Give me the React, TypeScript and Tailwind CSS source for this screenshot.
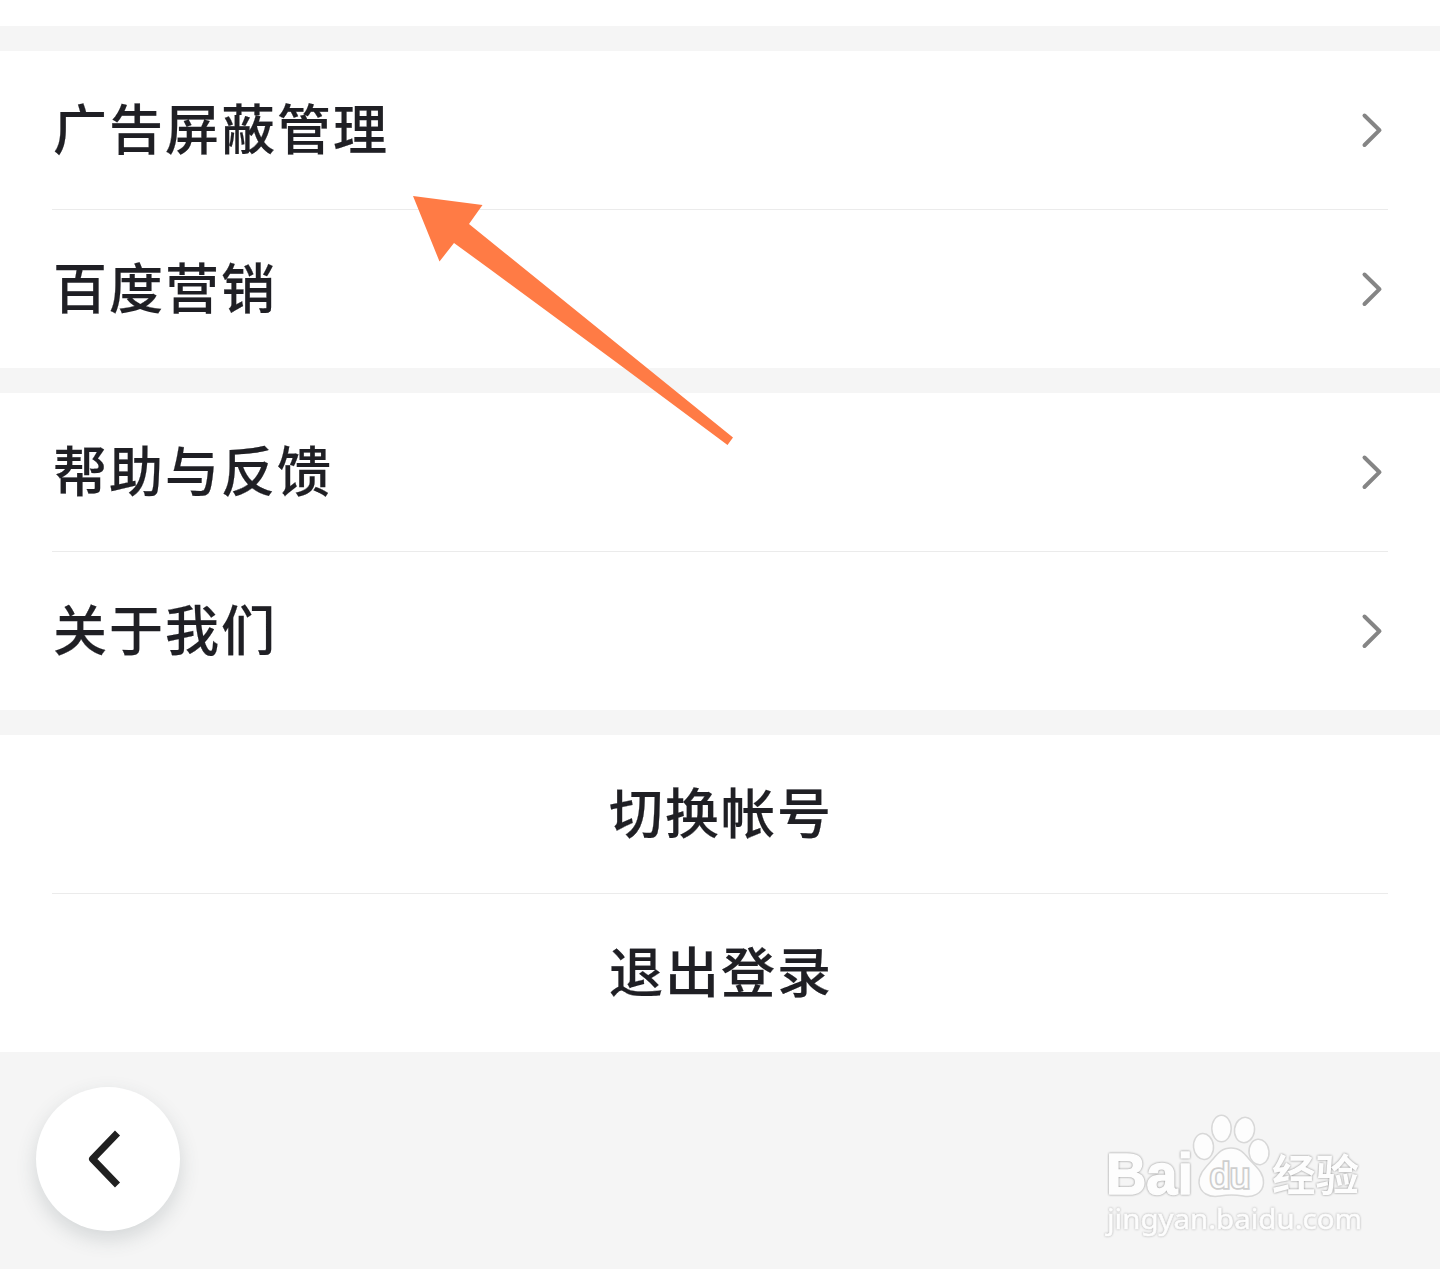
type RowItem = {
  label: string;
};

const linkGroups: RowItem[][] = [
  [{ label: "广告屏蔽管理" }, { label: "百度营销" }],
  [{ label: "帮助与反馈" }, { label: "关于我们" }],
];

const accountActions: RowItem[] = [{ label: "切换帐号" }, { label: "退出登录" }];

const labelClass =
  "text-[54px] leading-none font-medium tracking-[2px] text-[#1f1f24] [-webkit-text-stroke:0.2px_#1f1f24]";

const ChevronRight = () => (
  <svg className="h-9 w-6" viewBox="0 0 24 36" fill="none" stroke="#858585" strokeWidth="4">
    <path d="M4.500 3.500 L19.500 18.200 L4.500 33" strokeLinecap="round" strokeLinejoin="round" />
  </svg>
);

const Divider = () => <div className="mx-[52px] h-px bg-[#ebebeb]" />;

const LinkRow = ({ label }: RowItem) => (
  <button className="flex h-[158px] w-full items-center justify-between pr-14 pl-[53px]">
    <span className={`${labelClass} pb-[7px]`}>{label}</span>
    <ChevronRight />
  </button>
);

const ActionRow = ({ label }: RowItem) => (
  <button className="flex h-[158px] w-full items-center justify-center pb-[6px] pl-[2px]">
    <span className={labelClass}>{label}</span>
  </button>
);

const PointerArrow = () => (
  <svg
    className="pointer-events-none absolute top-[190px] left-[405px] h-[262px] w-[335px]"
    viewBox="405 190 335 262"
  >
    <path
      d="M413 196 L482.500 205 L469 224 Q600 330 733 437.500 L727.500 445 Q590 342 454 243 L439.500 261.500 Z"
      fill="#ff7b45"
    />
  </svg>
);

const BaiduWatermark = () => (
  <svg className="h-[150px] w-[290px]" viewBox="0 0 290 150" fill="#fdfdfd">
    <g stroke="#d8d8d8" strokeWidth="1.5">
      <ellipse cx="113.5" cy="46.5" rx="10" ry="13" transform="rotate(-6 113.5 46.5)" />
      <ellipse cx="131.5" cy="28.5" rx="9.7" ry="13.3" />
      <ellipse cx="154.5" cy="30" rx="10" ry="12.7" transform="rotate(8 154.5 30)" />
      <ellipse cx="169" cy="52" rx="10" ry="12.7" transform="rotate(-6 169 52)" />
      <path d="M141 48 C150 48 154 53 159 59 C165 66 174 72 173.500 83 C173 94 162 98 153 96 C145 94.500 138 94.500 130 96 C119 98 110 93 109 83 C108.500 73 117 66 123 59 C128 53 132 48 141 48 Z" />
    </g>
    <g
      className="[filter:drop-shadow(0_0_0.9px_#888888)]"
      stroke="#fdfdfd"
      strokeLinejoin="round"
    >
      <text
        x="16"
        y="94"
        className="font-['Liberation_Sans'] text-[58px] font-bold"
        strokeWidth="1.6"
        textLength="87"
        lengthAdjust="spacingAndGlyphs"
      >
        Bai
      </text>
      <text
        x="182"
        y="91"
        className="font-['Noto_Sans_CJK_SC'] text-[43px] font-bold"
        strokeWidth="0"
        textLength="87"
        lengthAdjust="spacingAndGlyphs"
      >
        经验
      </text>
    </g>
    <text
      x="17"
      y="129"
      className="font-['Noto_Sans'] text-[28px] [filter:drop-shadow(0_0_0.8px_#aaaaaa)]"
      stroke="#fdfdfd"
      strokeWidth="0.6"
      textLength="255"
      lengthAdjust="spacingAndGlyphs"
    >
      jingyan.baidu.com
    </text>
    <text
      x="120"
      y="88"
      className="font-['Liberation_Sans'] text-[35px] [paint-order:stroke]"
      stroke="#cecece"
      strokeWidth="3.6"
      strokeLinejoin="miter"
      textLength="40"
      lengthAdjust="spacingAndGlyphs"
    >
      du
    </text>
  </svg>
);

const App = () => {
  return (
    <div className="relative flex h-[1269px] w-[1440px] flex-col overflow-hidden bg-[#f5f5f5] font-['Noto_Sans_CJK_SC',sans-serif]">
      <div className="h-[26px] bg-white" />
      <main className="mt-[25px] flex flex-col gap-[25px]">
        {linkGroups.map(([first, second]) => (
          <section key={first.label} className="bg-white">
            <LinkRow label={first.label} />
            <Divider />
            <LinkRow label={second.label} />
          </section>
        ))}
        <section className="bg-white">
          <ActionRow label={accountActions[0].label} />
          <Divider />
          <ActionRow label={accountActions[1].label} />
        </section>
      </main>

      <footer className="flex flex-1 items-start justify-between pt-[35px] pr-[60px] pl-9">
        <button className="flex size-36 items-center justify-center rounded-full bg-white shadow-[0_8px_20px_rgba(60,75,85,0.18)]">
          <svg className="size-[72px]" viewBox="0 0 72 72" fill="none" stroke="#202020" strokeWidth="7">
            <path d="M45.500 10 L20.500 36 L45.500 62" strokeLinejoin="round" />
          </svg>
        </button>
        <div className="mt-[13px]">
          <BaiduWatermark />
        </div>
      </footer>

      <PointerArrow />
    </div>
  );
};

export default App;
